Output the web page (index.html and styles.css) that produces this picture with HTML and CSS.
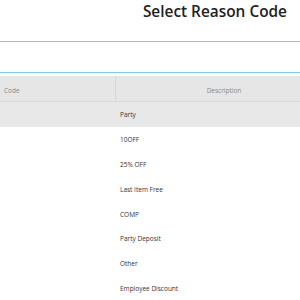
FILE: index.html
```html
<!DOCTYPE html>
<html>
<head>
<meta charset="utf-8">
<link rel="stylesheet" href="styles.css">
</head>
<body>
<div class="page">
  <h1 class="title">Select Reason Code</h1>
  <div class="search"></div>
  <div class="table">
    <div class="thead">
      <div class="th code">Code</div>
      <div class="th desc">Description</div>
    </div>
    <div class="row selected"><div class="td code"></div><div class="td desc">Party</div></div>
    <div class="row"><div class="td code"></div><div class="td desc">10OFF</div></div>
    <div class="row"><div class="td code"></div><div class="td desc">25% OFF</div></div>
    <div class="row"><div class="td code"></div><div class="td desc">Last Item Free</div></div>
    <div class="row"><div class="td code"></div><div class="td desc">COMP</div></div>
    <div class="row"><div class="td code"></div><div class="td desc">Party Deposit</div></div>
    <div class="row"><div class="td code"></div><div class="td desc">Other</div></div>
    <div class="row"><div class="td code"></div><div class="td desc">Employee Discount</div></div>
  </div>
</div>
</body>
</html>
```
FILE: styles.css
```css
html, body {
  margin: 0;
  padding: 0;
  overflow: hidden;
  background: #fff;
}
body {
  font-family: "Open Sans", "Noto Sans", sans-serif;
  color: #333;
}
.page {
  width: 300px;
}
.title {
  margin: 0;
  padding-right: 13px;
  font-size: 15.4px;
  font-weight: 600;
  line-height: 24px;
  text-align: right;
  color: #222;
}
.search {
  margin-top: 17px;
  height: 30px;
  border-top: 1px solid #7fcaea;
  border-bottom: 1px solid #7fcaea;
}
.table {
  margin-top: 3px;
}
.thead {
  display: grid;
  grid-template-columns: 116px 1fr;
  height: 25px;
  background: #e6e6e6;
  border-bottom: 1px solid #d9d9d9;
}
.th {
  display: flex;
  align-items: center;
  padding-top: 3px;
  font-size: 6.5px;
  color: #888;
  box-sizing: border-box;
}
.th.code {
  padding-left: 4px;
  border-right: 1px solid #d6d6d6;
}
.th.desc {
  justify-content: center;
  padding-left: 32px;
}
.row {
  display: grid;
  grid-template-columns: 116px 1fr;
  height: 24.8px;
  align-items: center;
  font-size: 6.5px;
  color: #333;
}
.row.selected {
  background: #e8e8e8;
}
.td {
  padding-top: 1px;
}
.td.desc {
  padding-left: 4px;
}
```
